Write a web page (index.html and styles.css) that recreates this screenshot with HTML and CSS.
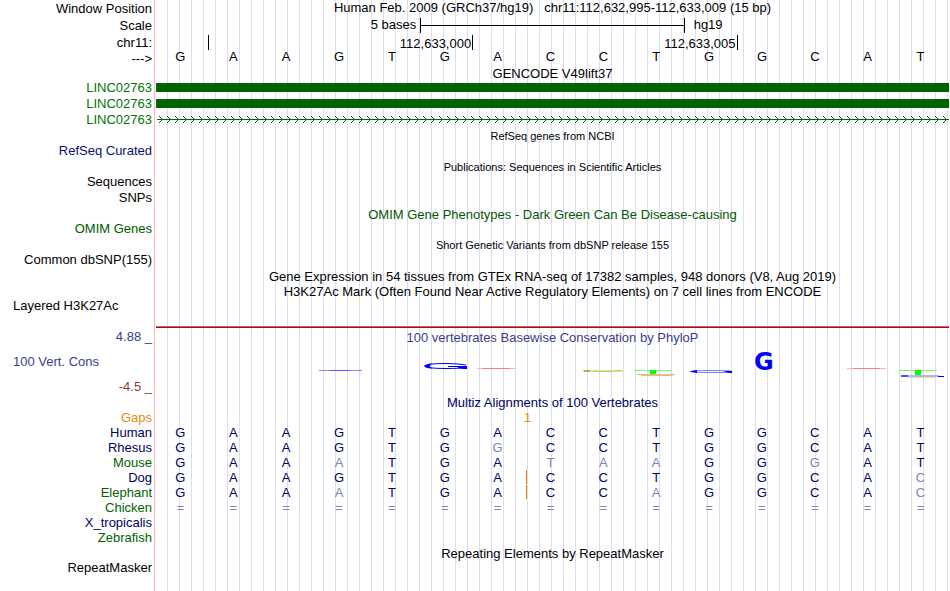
FILE: index.html
```html
<!DOCTYPE html>
<html lang="en">
<head>
<meta charset="utf-8">
<title>Human chr11:112,632,995-112,633,009</title>
<link rel="stylesheet" href="styles.css">
</head>
<body>
<main class="browser">
  <header>
    <div class="row">
      <div class="label">Window Position</div>
      <h1 class="title position">Human Feb. 2009 (GRCh37/hg19)   chr11:112,632,995-112,633,009 (15 bp)</h1>
    </div>
    <div class="row ruler-row">
      <div class="label">Scale</div>
      <div class="scale"><span class="scale-size">5 bases</span><span class="scale-bar"></span><span class="scale-db">hg19</span></div>
    </div>
    <div class="row ruler-row">
      <div class="label">chr11:</div>
      <div class="ticks"><span></span><span>112,633,000</span><span>112,633,005</span></div>
    </div>
    <div class="row sequence-row">
      <div class="label">---&gt;</div>
      <div class="bases"><span>G</span><span>A</span><span>A</span><span>G</span><span>T</span><span>G</span><span>A</span><span>C</span><span>C</span><span>T</span><span>G</span><span>G</span><span>C</span><span>A</span><span>T</span></div>
    </div>
  </header>

  <section>
    <h2 class="title gene-title">GENCODE V49lift37</h2>
    <div class="row"><div class="label gene">LINC02763</div><div class="exon"></div></div>
    <div class="row"><div class="label gene">LINC02763</div><div class="exon"></div></div>
    <div class="row">
      <div class="label gene">LINC02763</div>
      <svg class="intron" height="16" aria-hidden="true">
        <defs>
          <pattern id="strand" x="2" width="8" height="16" patternUnits="userSpaceOnUse">
            <path d="M1 4L4.5 7.5L1 11" fill="none" stroke="#006400" stroke-width="1"/>
          </pattern>
        </defs>
        <rect width="100%" height="16" fill="url(#strand)"/>
        <rect x="1" y="7" width="100%" height="1" fill="#006400"/>
      </svg>
    </div>
  </section>

  <section>
    <h2 class="title small">RefSeq genes from NCBI</h2>
    <div class="row"><div class="label refseq">RefSeq Curated</div></div>
  </section>
  <section>
    <h2 class="title small">Publications: Sequences in Scientific Articles</h2>
    <div class="row"><div class="label">Sequences</div></div>
    <div class="row"><div class="label">SNPs</div></div>
  </section>
  <section>
    <h2 class="title omim">OMIM Gene Phenotypes - Dark Green Can Be Disease-causing</h2>
    <div class="row"><div class="label omim">OMIM Genes</div></div>
  </section>
  <section>
    <h2 class="title small">Short Genetic Variants from dbSNP release 155</h2>
    <div class="row"><div class="label">Common dbSNP(155)</div></div>
  </section>
  <section>
    <h2 class="title gtex">Gene Expression in 54 tissues from GTEx RNA-seq of 17382 samples, 948 donors (V8, Aug 2019)</h2>
  </section>
  <section>
    <h2 class="title signal-title">H3K27Ac Mark (Often Found Near Active Regulatory Elements) on 7 cell lines from ENCODE</h2>
    <div class="row signal-row">
      <div class="label side">Layered H3K27Ac</div>
      <div class="signal"></div>
    </div>
  </section>

  <section class="row phylop">
    <div class="phylop-axis">
      <span class="label max">4.88 _</span>
      <span class="label side cons">100 Vert. Cons</span>
      <span class="label min">-4.5 _</span>
    </div>
    <div class="phylop-plot">
      <h2 class="title cons">100 vertebrates Basewise Conservation by PhyloP</h2>
      <div class="logo">
        <svg class="mark mark-4" viewBox="0 0 44 50"><rect x="0" y="24" width="43" height="1" fill="#8c8cff"/><rect x="11" y="24" width="20" height="1" fill="#5a5aff"/></svg>
        <svg class="mark mark-6" viewBox="0 0 44 50"><path d="M42 19Q34 17.5 22 17.5Q2 17.5 2 20Q2 22.5 22 22.5Q36 22.5 41 21.5V20.5H24" fill="none" stroke="#00f" stroke-width="1"/><path d="M0 20Q1 18 8 17.5Q4 20 8 22.5Q1 22 0 20ZM34 20H43V23H39L34 22Z" fill="#00f"/></svg>
        <svg class="mark mark-7" viewBox="0 0 44 50"><rect x="0" y="22" width="39" height="1" fill="#ffb4b4"/><rect x="6" y="22" width="27" height="1" fill="#ff7d7d"/></svg>
        <svg class="mark mark-9" viewBox="0 0 44 50"><rect x="0" y="24" width="40" height="2" fill="#dedea0"/><rect x="1" y="24" width="6" height="2" fill="#b4b43c"/><rect x="10" y="25" width="20" height="1" fill="#c8c864"/><rect x="32" y="24" width="6" height="1" fill="#c8c864"/></svg>
        <svg class="mark mark-10" viewBox="0 0 44 50"><rect x="-2" y="24" width="38" height="1" fill="#6eff6e"/><rect x="14" y="24" width="6" height="4" fill="#0f0"/><rect x="1" y="28" width="38" height="1" fill="#d2c864"/><rect x="5" y="29" width="32" height="1" fill="#ffaaaa"/></svg>
        <svg class="mark mark-11" viewBox="0 0 44 50"><path d="M42 25Q34 24.5 22 24.5Q3 24.5 2 25.5Q4 26.5 22 26.5H40" fill="none" stroke="#7878ff" stroke-width="1"/><path d="M0 25.5L8 24V27ZM34 25H43V27H40Z" fill="#00f"/></svg>
        <span class="mark-12">G</span>
        <svg class="mark mark-14" viewBox="0 0 44 50"><rect x="0" y="22" width="39" height="1" fill="#ffb4b4"/><rect x="6" y="22" width="27" height="1" fill="#ff7d7d"/></svg>
        <svg class="mark mark-15" viewBox="0 0 44 50"><rect x="-1" y="24" width="38" height="1" fill="#6eff6e"/><rect x="15" y="24" width="6" height="5" fill="#0f0"/><rect x="1" y="29" width="38" height="2" fill="#b4b4f0"/><rect x="1" y="29" width="7" height="2" fill="#5050ff"/><rect x="8" y="31" width="27" height="1" fill="#e6dcaa"/><rect x="38" y="30" width="6" height="1" fill="#00f"/></svg>
      </div>
    </div>
  </section>

  <section>
    <h2 class="title multiz">Multiz Alignments of 100 Vertebrates</h2>
    <table class="alignment">
      <tbody>
        <tr class="gaps"><th scope="row">Gaps</th><td></td><td></td><td></td><td></td><td></td><td></td><td></td><td class="gap-count">1</td><td></td><td></td><td></td><td></td><td></td><td></td><td></td></tr>
        <tr><th scope="row">Human</th><td>G</td><td>A</td><td>A</td><td>G</td><td>T</td><td>G</td><td>A</td><td>C</td><td>C</td><td>T</td><td>G</td><td>G</td><td>C</td><td>A</td><td>T</td></tr>
        <tr><th scope="row">Rhesus</th><td>G</td><td>A</td><td>A</td><td>G</td><td>T</td><td>G</td><td class="diff">G</td><td>C</td><td>C</td><td>T</td><td>G</td><td>G</td><td>C</td><td>A</td><td>T</td></tr>
        <tr class="alt"><th scope="row">Mouse</th><td>G</td><td>A</td><td>A</td><td class="diff">A</td><td>T</td><td>G</td><td>A</td><td class="diff">T</td><td class="diff">A</td><td class="diff">A</td><td>G</td><td>G</td><td class="diff">G</td><td>A</td><td>T</td></tr>
        <tr><th scope="row">Dog</th><td>G</td><td>A</td><td>A</td><td>G</td><td>T</td><td>G</td><td>A</td><td class="insert">C</td><td>C</td><td>T</td><td>G</td><td>G</td><td>C</td><td>A</td><td class="diff">C</td></tr>
        <tr class="alt"><th scope="row">Elephant</th><td>G</td><td>A</td><td>A</td><td class="diff">A</td><td>T</td><td>G</td><td>A</td><td class="insert">C</td><td>C</td><td class="diff">A</td><td>G</td><td>G</td><td>C</td><td>A</td><td class="diff">C</td></tr>
        <tr class="alt unaligned"><th scope="row">Chicken</th><td>=</td><td>=</td><td>=</td><td>=</td><td>=</td><td>=</td><td>=</td><td>=</td><td>=</td><td>=</td><td>=</td><td>=</td><td>=</td><td>=</td><td>=</td></tr>
        <tr><th scope="row">X_tropicalis</th><td colspan="15"></td></tr>
        <tr class="alt"><th scope="row">Zebrafish</th><td colspan="15"></td></tr>
      </tbody>
    </table>
  </section>

  <section>
    <h2 class="title">Repeating Elements by RepeatMasker</h2>
    <div class="row"><div class="label">RepeatMasker</div></div>
  </section>
</main>
</body>
</html>
```
FILE: styles.css
```css
* { box-sizing: border-box; }

body {
  margin: 0;
  background: #fff;
  color: #000;
  font: 13px/16px "Liberation Sans", Arial, sans-serif;
}

/* Label column, its pink edge, then a guide line every 12px */
.browser {
  min-height: 100vh;
  padding-right: 1px;
  background:
    linear-gradient(to right, #fff 154px, #ffb4b4 154px 155px, #fff 155px 156px, transparent 156px),
    repeating-linear-gradient(to right, transparent 0 11px, #dcdcf5 11px 12px);
}

.row {
  display: grid;
  grid-template-columns: 154px 1fr;
  column-gap: 2px;
  min-height: 16px;
}

.label {
  padding-right: 2px;
  text-align: right;
  white-space: nowrap;
}

.label.side {
  padding-left: 13px;
  text-align: left;
}

.title {
  margin: 0 0 0 156px;
  padding-top: 2px;
  font-size: 13px;
  font-weight: 400;
  line-height: 13px;
  text-align: center;
}

.row .title { margin-left: 0; }
.title.small { font-size: 11px; }
.title.gene-title { line-height: 12px; }
.title.gtex { line-height: 14px; }

.title.signal-title {
  padding-top: 0;
  line-height: 15px;
}

.title.position {
  padding-top: 0;
  line-height: 15px;
  white-space: pre-wrap;
}

.gene { color: #007800; }
.refseq { color: #0c0c78; }
.omim { color: #005a00; }
.cons, .max { color: #3c3c8c; }
.min { color: #8c3c3c; }

.title.multiz {
  padding-top: 0;
  color: #000064;
  line-height: 14px;
}

/* Header labels sit a little below the ruler text */
header .row { height: 16px; }
header .label { padding-top: 1px; }

header .ruler-row {
  height: 17px;
  line-height: 17px;
}

.scale {
  display: grid;
  grid-template-columns: 1fr 33.333% 1fr;
}

.scale-size {
  padding-right: 4px;
  text-align: right;
}

.scale-bar {
  align-self: center;
  height: 15px;
  border: solid #000;
  border-width: 0 1px;
  background: linear-gradient(#000, #000) center / 100% 1px no-repeat;
}

.scale-db { padding-left: 9px; }

.ticks {
  display: grid;
  grid-template-columns: 1fr 5fr 5fr 4fr;
  align-items: center;
}

.ticks span {
  height: 15px;
  padding-right: 1px;
  border-right: 1px solid #000;
  text-align: right;
}

.bases {
  display: grid;
  grid-template-columns: repeat(15, 1fr);
  margin: 0 2px 0 -2px;
  line-height: 14px;
  text-align: center;
}

.exon {
  height: 9px;
  margin-top: 3px;
  background: #006400;
}

.intron {
  display: block;
  width: 100%;
}

.signal-row {
  min-height: 29px;
  line-height: 14px;
}

.signal {
  align-self: end;
  height: 2px;
  border-top: 1px solid #ff5050;
  background: #8c1428;
}

.phylop { height: 68px; }

.phylop-axis {
  display: flex;
  flex-direction: column;
  justify-content: space-between;
  line-height: 18px;
}

.phylop .title { line-height: 16px; }

.logo {
  display: grid;
  grid-template-columns: repeat(15, 1fr);
  height: 50px;
}

.mark {
  grid-row: 1;
  width: 44px;
  height: 50px;
  margin-left: 4px;
  overflow: visible;
}

.mark-4 { grid-column: 4; }
.mark-6 { grid-column: 6; }
.mark-7 { grid-column: 7; }
.mark-9 { grid-column: 9; }
.mark-10 { grid-column: 10; }
.mark-11 { grid-column: 11; }
.mark-14 { grid-column: 14; }
.mark-15 { grid-column: 15; }

.mark-12 {
  grid-row: 1;
  grid-column: 12;
  color: #00f;
  font: bold 24px/32px "DejaVu Sans", sans-serif;
  text-align: center;
}

.alignment {
  width: calc(100% - 2px);
  table-layout: fixed;
  border-collapse: collapse;
  color: #000064;
  line-height: 15px;
}

.alignment tr { height: 15px; }

.alignment th {
  width: 154px;
  padding: 0 2px 0 0;
  font-weight: 400;
  text-align: right;
}

.alignment td {
  position: relative;
  padding: 0;
  text-align: center;
}

.alignment .alt th { color: #006400; }
.alignment .diff, .unaligned td { color: #8282b4; }
.alignment .gaps { color: #e68c0a; }
.alignment .gaps .gap-count { text-align: left; }

.insert::before {
  content: "";
  position: absolute;
  top: 0;
  left: 2px;
  width: 1px;
  height: 14px;
  background: #e68200;
}
```
